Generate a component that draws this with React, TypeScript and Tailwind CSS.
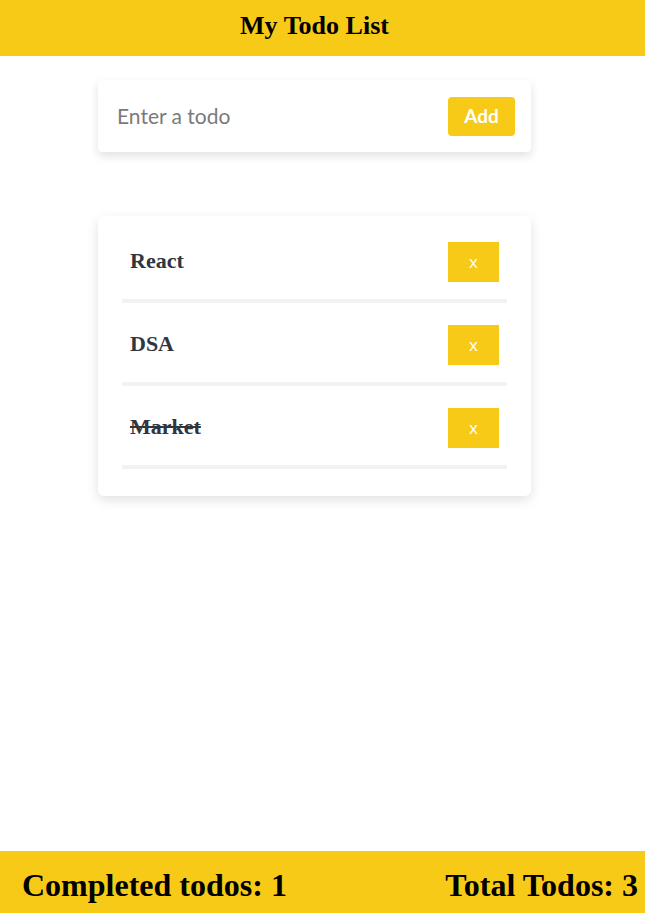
import { useState } from "react";

type Todo = { id: number; text: string; done: boolean };

const initial: Todo[] = [
  { id: 1, text: "React", done: false },
  { id: 2, text: "DSA", done: false },
  { id: 3, text: "Market", done: true },
];

const App = () => {
  const [todos, setTodos] = useState<Todo[]>(initial);
  const [value, setValue] = useState("");

  const addTodo = () => {
    if (!value.trim()) return;
    setTodos([...todos, { id: Date.now(), text: value, done: false }]);
    setValue("");
  };

  const completed = todos.filter((t) => t.done).length;

  return (
    <div className="flex min-h-screen flex-col bg-white font-['Liberation_Serif',serif]">
      <header className="flex h-[56px] items-center justify-center bg-[#f7ca18] pr-[16px] pb-[6px]">
        <h1 className="text-[26px] font-bold text-black">My Todo List</h1>
      </header>

      <main className="ml-[98px] flex w-[433px] flex-col">
        <div className="mt-[24px] flex h-[72px] items-center rounded-[4px] bg-white pr-[16px] pl-[19px] shadow-[0_4px_10px_rgba(0,0,0,0.12)]">
          <input
            value={value}
            onChange={(e) => setValue(e.target.value)}
            placeholder="Enter a todo"
            className="flex-1 bg-transparent font-['Lato',sans-serif] text-[21px] text-[#333] outline-none placeholder:text-[#7a7a7a]"
          />
          <button
            onClick={addTodo}
            className="h-[39px] w-[67px] rounded-[4px] bg-[#f7ca18] font-['Lato',sans-serif] text-[19px] font-bold text-white"
          >
            Add
          </button>
        </div>

        <ul className="mt-[64px] rounded-[6px] bg-white px-[24px] pt-[4px] pb-[27px] shadow-[0_4px_12px_rgba(0,0,0,0.12)]">
          {todos.map((todo) => (
            <li
              key={todo.id}
              className="flex items-center justify-between border-b-4 border-[#f2f2f2] px-[8px] pt-[22px] pb-[17px]"
            >
              <span
                onClick={() =>
                  setTodos(todos.map((t) => (t.id === todo.id ? { ...t, done: !t.done } : t)))
                }
                className={`-mt-[4px] text-[22px] font-bold text-[#2f3640] ${todo.done ? "line-through" : ""}`}
              >
                {todo.text}
              </span>
              <button
                onClick={() => setTodos(todos.filter((t) => t.id !== todo.id))}
                className="h-[40px] w-[51px] bg-[#f7ca18] font-['Open_Sans',sans-serif] text-[17px] text-white"
              >
                x
              </button>
            </li>
          ))}
        </ul>
      </main>

      <footer className="mt-auto flex h-[62px] items-center justify-between bg-[#f7ca18] pt-[5px] pr-[7px] pl-[22px]">
        <span className="text-[32px] font-bold text-black">Completed todos: {completed}</span>
        <span className="text-[32px] font-bold text-black">Total Todos: {todos.length}</span>
      </footer>
    </div>
  );
};

export default App;
